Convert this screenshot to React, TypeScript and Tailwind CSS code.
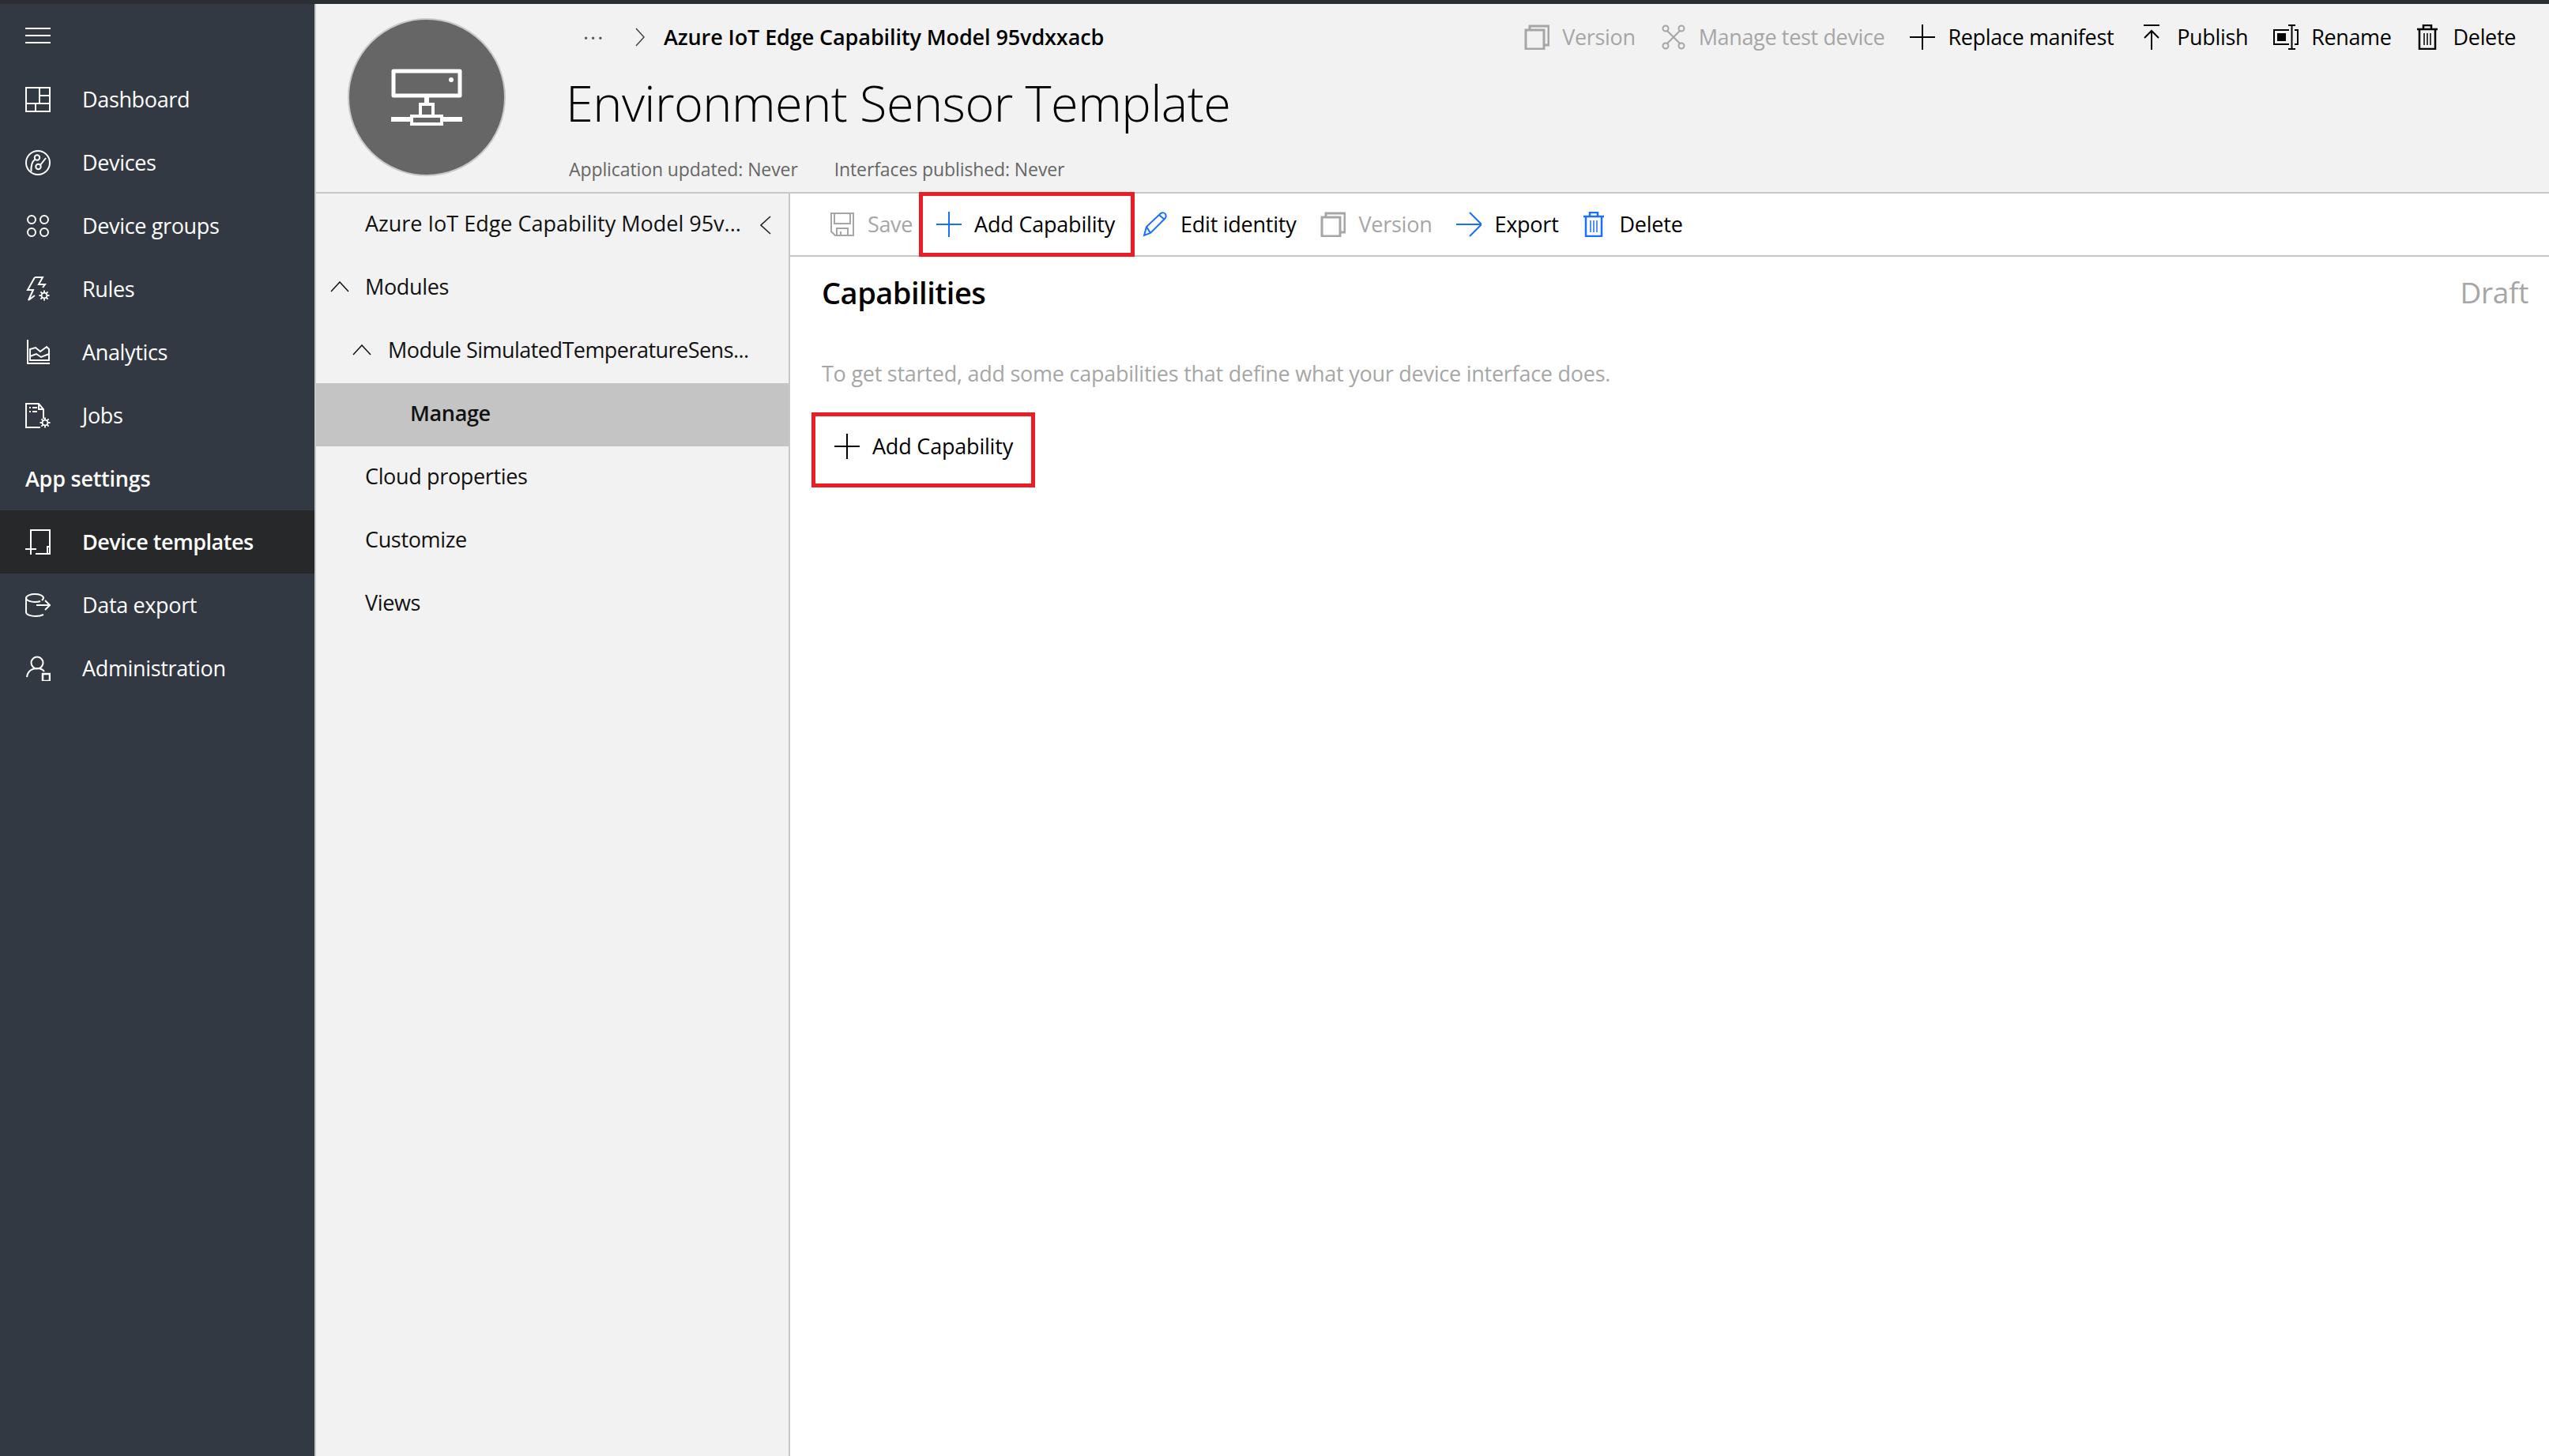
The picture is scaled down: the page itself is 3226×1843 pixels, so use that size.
import type { ReactNode } from 'react';

type IconProps = { className?: string };

function Svg({ className = 'w-8 h-8', children, w = 32, h = 32, strokeWidth = 2 }: IconProps & { children: ReactNode; w?: number; h?: number; strokeWidth?: number }) {
  return (
    <svg viewBox={`0 0 ${w} ${h}`} fill="none" stroke="currentColor" strokeWidth={strokeWidth} className={`shrink-0 ${className}`}>
      {children}
    </svg>
  );
}

function Gear({ x, y }: { x: number; y: number }) {
  return (
    <g transform={`translate(${x} ${y})`} strokeWidth={1.8}>
      <circle r={3.4} />
      <path d="M0-6.5V-3.4M0 3.4V6.5M-6.5 0H-3.4M3.4 0H6.5M-4.6-4.6-2.4-2.4M2.4 2.4 4.6 4.6M-4.6 4.6-2.4 2.4M2.4-2.4 4.6-4.6" />
    </g>
  );
}

const DashboardIcon = () => (
  <Svg><path d="M1 1h30v30H1zM18 1v20M1 21h30M18 11h13M13 21v10" /></Svg>
);
const DevicesIcon = () => (
  <Svg>
    <circle cx="16" cy="16" r="15" />
    <circle cx="15" cy="9.5" r="3.2" />
    <circle cx="16.5" cy="21" r="3.2" />
    <path d="M19 19 26 10M12.5 11.5C8 15 7 20 7.5 27" />
  </Svg>
);
const GroupsIcon = () => (
  <Svg>
    <circle cx="8" cy="8" r="5" />
    <circle cx="24" cy="8" r="5" />
    <circle cx="8" cy="24" r="5" />
    <circle cx="24" cy="24" r="5" />
  </Svg>
);
const RulesIcon = () => (
  <Svg>
    <path d="M12 1h10l-5 9h8l-3 4M12 1 3 17h7L4 30l8-6" />
    <Gear x={24} y={24} />
  </Svg>
);
const AnalyticsIcon = () => (
  <Svg>
    <path d="M3 0v30h28" />
    <path d="M6 26V12l7-2 6 5 8-6 3 3v14zM6 21l8-3 6 4 10-4" />
  </Svg>
);
const JobsIcon = () => (
  <Svg>
    <path d="M23 20V8l-6-7H1v30h18M17 1v7h6" />
    <path d="M5 6h2M9 6h6M5 11h2M9 11h6" />
    <Gear x={25} y={25} />
  </Svg>
);
const TemplatesIcon = () => (
  <Svg>
    <path d="M7 22V1h24v26M13 31h18V22h-3v9" />
    <path d="M0 25h14M7 18v14" />
  </Svg>
);
const ExportIcon = () => (
  <Svg>
    <path d="M1 7v18c0 3 6 5 12 5 4 0 8-1 10-2M1 7c0-3 6-5 11-5 6 0 11 2 11 5 0 1-1 2-2 3M1 7c0 3 6 5 11 5 3 0 5 0 7-1" />
    <path d="M14 16h17M25 10l6 6-6 6" />
  </Svg>
);
const AdminIcon = () => (
  <Svg>
    <circle cx="15" cy="9" r="7.5" />
    <path d="M2 27c1-7 6-11 13-11 4 0 7 1 9 4" />
    <path d="M22 23h9v9h-9z" strokeWidth={2.5} />
  </Svg>
);

const PlusIcon = () => <Svg><path d="M16 0v32M0 16h32" /></Svg>;
const VersionIcon = () => (
  <Svg><path d="M7 7V2h24v24h-6M2 7h23v24H2z" strokeWidth={3} /></Svg>
);
const ManageIcon = () => (
  <Svg>
    <circle cx="6" cy="5" r="3.5" />
    <circle cx="26" cy="5" r="3.5" />
    <circle cx="6" cy="27" r="3.5" />
    <circle cx="26" cy="27" r="3.5" />
    <path d="M8 8 24 24M24 8 8 24" />
  </Svg>
);
const PublishIcon = () => <Svg><path d="M6 1h20M16 32V8M7 17l9-9 9 9" /></Svg>;
const RenameIcon = () => (
  <Svg>
    <path d="M20 7H1v18h19M27 7h4v18h-4" />
    <path d="M6 12h9v8H6z" fill="currentColor" />
    <path d="M23.5 1v30M19 1h9M19 31h9" />
  </Svg>
);
const TrashIcon = () => (
  <Svg className="w-[26px] h-8" w={26}>
    <path d="M0 6h26M8 6V1h10v5M3 6v25h20V6" strokeWidth={2.5} />
    <path d="M9 11v15M13 11v15M17 11v15" strokeWidth={1.5} />
  </Svg>
);
const SaveIcon = () => (
  <Svg>
    <path d="M2 2h28v28H7l-5-5z" />
    <path d="M6 2v13h20V2M9 30v-9h14v9M14 25v5" />
  </Svg>
);
const EditIcon = () => (
  <Svg><path d="M2 30 5 19 23 2c2-1 5-1 6 1s1 4-1 6L10 27zM5 19l5 8M21 4l7 6" /></Svg>
);
const ArrowIcon = () => <Svg><path d="M0 16h31M17 1l15 15-15 15" /></Svg>;

const ChevronUp = () => (
  <svg viewBox="0 0 24 14" fill="none" stroke="currentColor" strokeWidth={1.5} className="w-6 h-[14px] shrink-0">
    <path d="M1 13 12 1l11 12" />
  </svg>
);

function ServerGlyph() {
  return (
    <svg viewBox="0 0 90 72" fill="none" stroke="white" strokeWidth={5} className="w-[90px] h-[72px]">
      <path d="M3 3h84v31H3z" strokeLinejoin="round" />
      <circle cx="76" cy="14" r="3" fill="white" stroke="none" />
      <path d="M45 36v8" strokeWidth={6} />
      <path d="M37 60V45h16v15" strokeWidth={4} />
      <path d="M0 64h24M66 64h24" strokeWidth={6} />
      <path d="M26 60h38v10H26z" strokeWidth={4} />
    </svg>
  );
}

const navTop = [
  { label: 'Dashboard', icon: <DashboardIcon /> },
  { label: 'Devices', icon: <DevicesIcon /> },
  { label: 'Device groups', icon: <GroupsIcon /> },
  { label: 'Rules', icon: <RulesIcon /> },
  { label: 'Analytics', icon: <AnalyticsIcon /> },
  { label: 'Jobs', icon: <JobsIcon /> },
];

function NavRow({ label, icon, active }: { label: string; icon: ReactNode; active?: boolean }) {
  return (
    <div className={`flex items-center h-20 pl-8 gap-10 ${active ? 'bg-[#272829] font-semibold tracking-[-0.5px]' : ''}`}>
      {icon}
      <span>{label}</span>
    </div>
  );
}

function Action({ icon, label, muted, tone, gap = 'gap-4' }: { icon: ReactNode; label: string; muted?: boolean; tone?: string; gap?: string }) {
  return (
    <div className={`flex items-center ${gap} ${muted ? 'text-[#a6a6a6]' : 'text-black'}`}>
      <span className={`flex ${tone ?? ''}`}>{icon}</span>
      <span>{label}</span>
    </div>
  );
}

export default function App() {
  return (
    <div className="h-screen flex flex-col overflow-hidden bg-white text-[27px] tracking-[-0.35px] font-['Open_Sans',sans-serif]">
      <div className="h-[5px] shrink-0 bg-[#2a2d31]" />
      <div className="flex flex-1 min-h-0">
        <aside className="w-[400px] shrink-0 bg-[#333942] text-white border-r-2 border-[#c8c8c8]">
          <div className="h-[81px] pl-8 flex items-center">
            <div className="w-8 flex flex-col gap-[7px] -mt-[1px]">
              <div className="h-[2px] bg-white" />
              <div className="h-[2px] bg-white" />
              <div className="h-[2px] bg-white" />
            </div>
          </div>
          {navTop.map((n) => (
            <NavRow key={n.label} {...n} />
          ))}
          <div className="h-20 pl-8 flex items-center font-semibold tracking-[-0.25px]">App settings</div>
          <NavRow label="Device templates" icon={<TemplatesIcon />} active />
          <NavRow label="Data export" icon={<ExportIcon />} />
          <NavRow label="Administration" icon={<AdminIcon />} />
        </aside>

        <div className="flex-1 min-w-0 flex flex-col">
          <header className="h-[240px] shrink-0 bg-[#f2f2f2] border-b-2 border-[#c8c8c8] flex pl-10">
            <div className="mt-[18px] w-[200px] h-[200px] rounded-full bg-[#666666] border-2 border-[#c8c8c8] flex items-center justify-center shrink-0">
              <ServerGlyph />
            </div>
            <div className="flex-1 ml-[76px] min-w-0 flex flex-col">
              <div className="h-[84px] flex items-center shrink-0">
                <span className="ml-[22px] w-[32px] text-[#555] tracking-[2px] -mt-[14px]">...</span>
                <svg viewBox="0 0 12 24" fill="none" stroke="#444" strokeWidth={1.5} className="ml-[34px] w-3 h-6">
                  <path d="M1 1l10 11L1 23" />
                </svg>
                <span className="ml-[24px] font-semibold tracking-[-0.1px] text-black">Azure IoT Edge Capability Model 95vdxxacb</span>
                <div className="ml-auto pr-[42px] flex items-center gap-8">
                  <Action muted icon={<VersionIcon />} label="Version" />
                  <Action muted icon={<ManageIcon />} label="Manage test device" />
                  <Action icon={<PlusIcon />} label="Replace manifest" />
                  <Action icon={<PublishIcon />} label="Publish" />
                  <Action icon={<RenameIcon />} label="Rename" />
                  <Action icon={<TrashIcon />} label="Delete" gap="gap-5" />
                </div>
              </div>
              <div className="h-[82px] flex items-center text-[63px] font-light tracking-[-0.55px] text-black shrink-0">
                Environment Sensor Template
              </div>
              <div className="flex items-center gap-[46px] pl-1 pt-[26px] text-[23px] tracking-[-0.1px] text-[#666]">
                <span>Application updated: Never</span>
                <span>Interfaces published: Never</span>
              </div>
            </div>
          </header>

          <div className="flex flex-1 min-h-0">
            <nav className="w-[600px] shrink-0 bg-[#f2f2f2] border-r-2 border-[#c8c8c8] text-[#111]">
              <div className="h-20 flex items-center pl-[62px] pr-[22px] pb-1 justify-between">
                <span className="tracking-normal">Azure IoT Edge Capability Model 95v...</span>
                <svg viewBox="0 0 14 24" fill="none" stroke="#222" strokeWidth={1.6} className="w-[14px] h-6 mt-1">
                  <path d="M13 1 1 12l12 11" />
                </svg>
              </div>
              <div className="h-20 flex items-center pl-[18px] pb-1 gap-5"><ChevronUp />Modules</div>
              <div className="h-20 flex items-center pl-[46px] pb-1 gap-[21px] tracking-[-0.53px]"><ChevronUp />Module SimulatedTemperatureSens...</div>
              <div className="h-20 flex items-center pl-[119px] pb-1 bg-[#c4c4c4] font-semibold">Manage</div>
              <div className="h-20 flex items-center pl-[62px] pb-1">Cloud properties</div>
              <div className="h-20 flex items-center pl-[62px] pb-1">Customize</div>
              <div className="h-20 flex items-center pl-[62px] pb-1">Views</div>
            </nav>

            <main className="flex-1 min-w-0 bg-white">
              <div className="h-[80px] border-b-2 border-[#c8c8c8] flex items-center pl-[50px]">
                <Action muted icon={<SaveIcon />} label="Save" />
                <div className="ml-2 w-[273px] h-[82px] -my-px border-[5px] border-[#ed1c24] flex items-center pl-[17px] tracking-[-0.2px]">
                  <Action tone="text-[#1a6fff]" icon={<PlusIcon />} label="Add Capability" />
                </div>
                <div className="ml-[10px] flex items-center gap-[31px] tracking-[-0.25px]">
                  <Action tone="text-[#1a6fff]" icon={<EditIcon />} label="Edit identity" />
                  <Action muted icon={<VersionIcon />} label="Version" />
                  <Action tone="text-[#1a6fff]" icon={<ArrowIcon />} label="Export" />
                  <Action tone="text-[#1a6fff]" icon={<TrashIcon />} label="Delete" gap="gap-5" />
                </div>
              </div>
              <div className="flex items-center justify-between pl-10 pr-[26px] h-[90px]">
                <span className="text-[38px] font-semibold tracking-[-0.5px] text-black">Capabilities</span>
                <span className="text-[37px] text-[#a6a6a6]">Draft</span>
              </div>
              <p className="pl-10 mt-[38px] text-[#a6a6a6] tracking-[-0.25px]">To get started, add some capabilities that define what your device interface does.</p>
              <div className="ml-[27px] mt-[28px] w-[283px] h-[95px] border-[5px] border-[#ed1c24] flex items-center pl-6 pb-2 text-black tracking-[-0.2px]">
                <Action icon={<PlusIcon />} label="Add Capability" />
              </div>
            </main>
          </div>
        </div>
      </div>
    </div>
  );
}
